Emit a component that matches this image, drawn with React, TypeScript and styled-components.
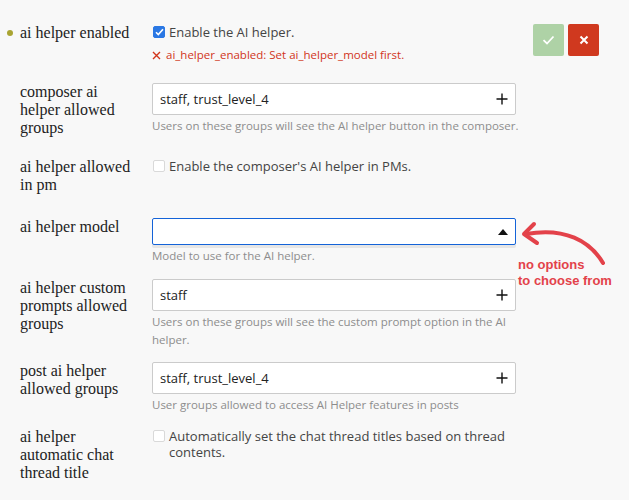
import React, { FC } from 'react';
import styled, { createGlobalStyle } from 'styled-components';

const GlobalStyle = createGlobalStyle`
  html, body {
    margin: 0;
    padding: 0;
    background: #f8f8f8;
  }
  body {
    font-family: 'Open Sans', 'Noto Sans', sans-serif;
    color: #222222;
  }
`;

const Page = styled.div`
  position: relative;
  width: 629px;
  height: 500px;
  padding-top: 24px;
  box-sizing: border-box;
  overflow: hidden;
`;

const SettingRow = styled.div<{ $space: number }>`
  display: flex;
  align-items: flex-start;
  padding-bottom: ${p => p.$space}px;
`;

const LabelCol = styled.div`
  display: flex;
  align-items: flex-start;
  width: 152px;
  flex-shrink: 0;
`;

const Marker = styled.div`
  width: 20px;
  height: 18px;
  display: flex;
  align-items: center;
  justify-content: center;
  flex-shrink: 0;
`;

const Dot = styled.span`
  width: 6px;
  height: 6px;
  border-radius: 50%;
  background: #a9a432;
`;

const LabelText = styled.h3`
  margin: 0;
  width: 115px;
  font-family: 'Liberation Serif', 'DejaVu Serif', serif;
  font-weight: 400;
  font-size: 16px;
  line-height: 18px;
  color: #222222;
`;

const ValueCol = styled.div`
  width: 364px;
  flex-shrink: 0;
  display: flex;
  flex-direction: column;
`;

const CheckLine = styled.label`
  display: flex;
  align-items: flex-start;
  gap: 2px;
  font-size: 13px;
  line-height: 16px;
  color: #444444;
`;

const Box = styled.span<{ $checked: boolean }>`
  width: 12px;
  height: 12px;
  margin: 2px 2px 0 1px;
  flex-shrink: 0;
  border-radius: 2px;
  box-sizing: border-box;
  display: flex;
  align-items: center;
  justify-content: center;
  background: ${p => (p.$checked ? '#2b78e4' : '#ffffff')};
  border: 1px solid ${p => (p.$checked ? '#2b78e4' : '#d9d9d9')};
`;

const CheckText = styled.span`
  width: 345px;
`;

const ErrorLine = styled.div`
  display: flex;
  align-items: center;
  gap: 5px;
  margin-top: 6px;
  font-size: 11.5px;
  line-height: 18px;
  color: #d1351b;
`;

const Field = styled.div<{ $focused?: boolean }>`
  height: ${p => (p.$focused ? 27 : 32)}px;
  box-sizing: border-box;
  display: flex;
  align-items: center;
  justify-content: space-between;
  padding: 0 7px 0 7px;
  background: #ffffff;
  border: ${p => (p.$focused ? '1.5px solid #1463d8' : '1px solid #cbcbcb')};
  border-radius: 2px;
  box-shadow: ${p => (p.$focused ? '0 3px 0 #e6e6e6' : 'none')};
  font-size: 13px;
  color: #222222;
`;

const Desc = styled.div`
  margin-top: 2px;
  margin-right: -6px;
  font-size: 11.5px;
  line-height: 18px;
  color: #8d8d8d;
`;

const Actions = styled.div`
  display: flex;
  gap: 4px;
  margin-left: 17px;
`;

const ActionButton = styled.button<{ $tone: 'ok' | 'cancel' }>`
  width: 31px;
  height: 32px;
  border: none;
  border-radius: 2px;
  padding: 0;
  display: flex;
  align-items: center;
  justify-content: center;
  background: ${p => (p.$tone === 'ok' ? '#aed2a6' : '#d0391f')};
`;

const Annotation = styled.div`
  position: absolute;
  left: 510px;
  top: 215px;
  width: 119px;
  height: 80px;
  pointer-events: none;
`;

const NoteText = styled.div`
  position: absolute;
  left: 8px;
  top: 42px;
  font-family: 'Liberation Sans', Arial, sans-serif;
  font-weight: 700;
  font-size: 13px;
  line-height: 16px;
  color: #e3424a;
  white-space: nowrap;
`;

const Plus = () => (
  <svg width="12" height="12" viewBox="0 0 12 12">
    <path d="M6 0.5v11M0.5 6h11" stroke="#111" strokeWidth="1.4" />
  </svg>
);

const Caret = () => (
  <svg width="10" height="6" viewBox="0 0 10 6">
    <polygon points="5,0 10,6 0,6" fill="#111" />
  </svg>
);

const Checkbox: FC<{ checked?: boolean; children: React.ReactNode }> = ({
  checked = false,
  children,
}) => (
  <CheckLine>
    <Box $checked={checked}>
      {checked && (
        <svg width="9" height="8" viewBox="0 0 9 8">
          <path
            d="M1 4.2l2.3 2.3L8 1.2"
            stroke="#fff"
            strokeWidth="1.6"
            fill="none"
          />
        </svg>
      )}
    </Box>
    <CheckText>{children}</CheckText>
  </CheckLine>
);

const Label: FC<{ dirty?: boolean; children: React.ReactNode }> = ({
  dirty,
  children,
}) => (
  <LabelCol>
    <Marker>{dirty && <Dot />}</Marker>
    <LabelText>{children}</LabelText>
  </LabelCol>
);

const GroupField: FC<{ value: string }> = ({ value }) => (
  <Field>
    <span>{value}</span>
    <Plus />
  </Field>
);

export default function App() {
  return (
    <>
      <GlobalStyle />
      <Page>
        <SettingRow $space={19}>
          <Label dirty>ai helper enabled</Label>
          <ValueCol>
            <Checkbox checked>Enable the AI helper.</Checkbox>
            <ErrorLine>
              <svg width="9" height="9" viewBox="0 0 9 9">
                <path d="M1 1l7 7M8 1l-7 7" stroke="#d1351b" strokeWidth="1.4" />
              </svg>
              ai_helper_enabled: Set ai_helper_model first.
            </ErrorLine>
          </ValueCol>
          <Actions>
            <ActionButton $tone="ok">
              <svg width="13" height="10" viewBox="0 0 13 10">
                <path d="M1.5 5.2l3.5 3.3L11.5 1.5" stroke="#fff" strokeWidth="1.8" fill="none" />
              </svg>
            </ActionButton>
            <ActionButton $tone="cancel">
              <svg width="10" height="10" viewBox="0 0 10 10">
                <path d="M1.5 1.5l7 7M8.5 1.5l-7 7" stroke="#fff" strokeWidth="2" />
              </svg>
            </ActionButton>
          </Actions>
        </SettingRow>

        <SettingRow $space={21}>
          <Label>composer ai helper allowed groups</Label>
          <ValueCol>
            <GroupField value="staff, trust_level_4" />
            <Desc>Users on these groups will see the AI helper button in the composer.</Desc>
          </ValueCol>
        </SettingRow>

        <SettingRow $space={24}>
          <Label>ai helper allowed in pm</Label>
          <ValueCol>
            <Checkbox>Enable the composer's AI helper in PMs.</Checkbox>
          </ValueCol>
        </SettingRow>

        <SettingRow $space={14}>
          <Label>ai helper model</Label>
          <ValueCol>
            <Field $focused>
              <span />
              <Caret />
            </Field>
            <Desc>Model to use for the AI helper.</Desc>
          </ValueCol>
        </SettingRow>

        <SettingRow $space={13}>
          <Label>ai helper custom prompts allowed groups</Label>
          <ValueCol>
            <GroupField value="staff" />
            <Desc>
              Users on these groups will see the custom prompt option in the AI helper.
            </Desc>
          </ValueCol>
        </SettingRow>

        <SettingRow $space={14}>
          <Label>post ai helper allowed groups</Label>
          <ValueCol>
            <GroupField value="staff, trust_level_4" />
            <Desc>User groups allowed to access AI Helper features in posts</Desc>
          </ValueCol>
        </SettingRow>

        <SettingRow $space={0}>
          <Label>ai helper automatic chat thread title</Label>
          <ValueCol>
            <Checkbox>
              Automatically set the chat thread titles based on thread contents.
            </Checkbox>
          </ValueCol>
        </SettingRow>

        <Annotation>
          <svg width="119" height="50" viewBox="0 0 119 50">
            <path
              d="M93 48 C80 26 55 12 16 19"
              stroke="#e3424a"
              strokeWidth="4"
              fill="none"
              strokeLinecap="round"
            />
            <path
              d="M24 9 L14 19 L27 28"
              stroke="#e3424a"
              strokeWidth="4"
              fill="none"
              strokeLinecap="round"
              strokeLinejoin="round"
            />
          </svg>
          <NoteText>
            no options
            <br />
            to choose from
          </NoteText>
        </Annotation>
      </Page>
    </>
  );
}
